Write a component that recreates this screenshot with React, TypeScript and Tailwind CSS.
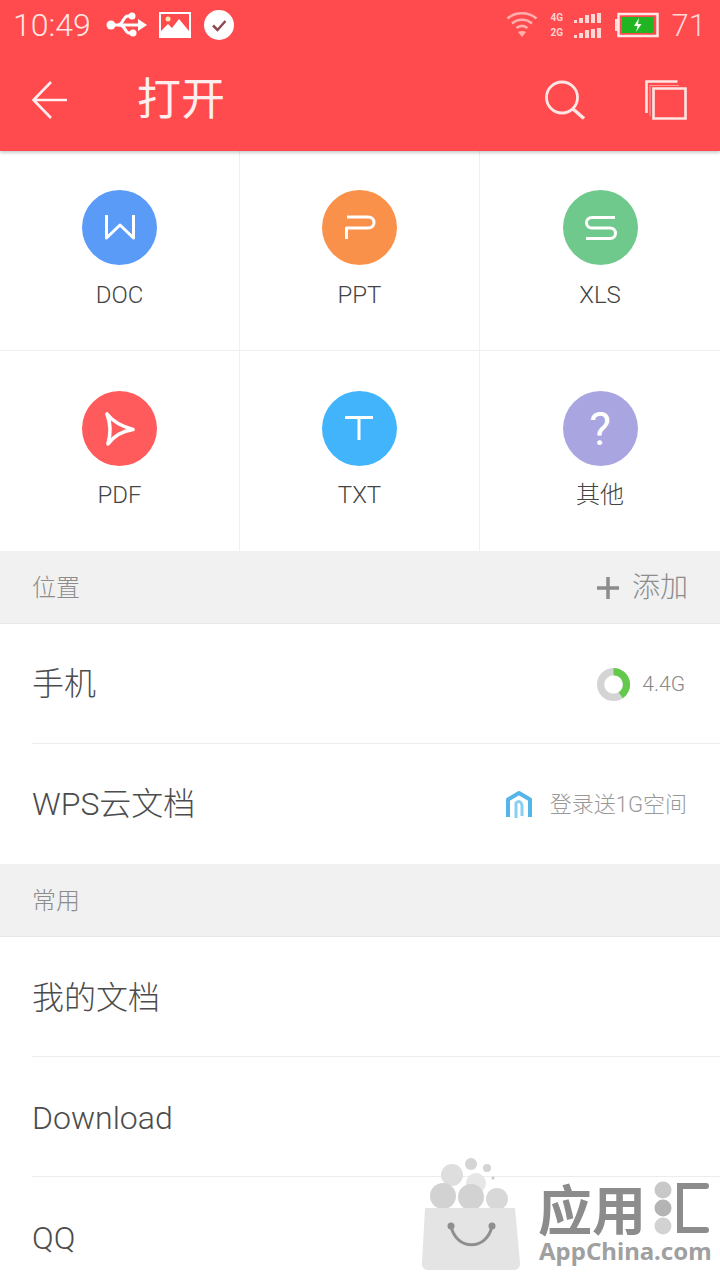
import type { ReactNode } from 'react';

const FONT = "font-['Roboto','Noto_Sans_CJK_SC',sans-serif]";

function UsbIcon() {
  return (
    <svg width="42" height="28" viewBox="0 0 42 28" fill="#fff">
      <circle cx="5" cy="14" r="4.500" />
      <path d="M5 12.500h29v3H5z" />
      <path d="M32 8l9 6-9 6z" />
      <path d="M12 14c5 0 5-9 10-9h3M14 14c5 0 5 8 9 8h3" fill="none" stroke="#fff" strokeWidth="3" />
      <circle cx="26" cy="5" r="3.500" />
      <circle cx="27" cy="22" r="3.500" />
    </svg>
  );
}

function PictureIcon() {
  return (
    <svg width="32" height="28" viewBox="0 0 32 28">
      <rect x="0" y="1" width="32" height="26" fill="#fff" />
      <rect x="2" y="3" width="28" height="17" fill="#ff4a4e" />
      <circle cx="9" cy="8" r="2.500" fill="#ffe9b0" />
      <path d="M2 20l7-7 4 4 7-9 10 12z" fill="#fff" />
    </svg>
  );
}

function CheckBadge() {
  return (
    <svg width="30" height="30" viewBox="0 0 30 30">
      <circle cx="15" cy="15" r="15" fill="#fff" />
      <path d="M9 15.500l4.500 4.500 8-9" fill="none" stroke="#8a4a50" strokeWidth="2.500" />
    </svg>
  );
}

function WifiIcon() {
  return (
    <svg width="32" height="28" viewBox="0 0 32 28" fill="none" stroke="#ffb0ae" strokeWidth="2.600">
      <path d="M1.500 7.500c8-7 21-7 29 0" />
      <path d="M6 12.500c6-5 14-5 20 0" />
      <path d="M10.500 17c3.500-2.800 7.500-2.800 11 0" />
      <path d="M16 26l-4-5c2.500-1.500 5.500-1.500 8 0z" fill="#ffb0ae" stroke="none" />
    </svg>
  );
}

function SignalRow({ label }: { label: string }) {
  return (
    <div className="flex h-[10px] items-center gap-[2px]">
      <span className="w-[15px] text-[10px] font-bold leading-none text-[#ffd0ce]">{label}</span>
      <span className="ml-[6px] h-[3px] w-[3px] self-end bg-[#ffd8d6]" />
      <span className="h-[5px] w-[4px] self-end bg-[#ffd8d6]" />
      <span className="h-[8px] w-[4px] self-end bg-[#ffd8d6]" />
      <span className="h-[9px] w-[4px] self-end bg-[#ffd8d6]" />
      <span className="h-[10px] w-[4px] self-end bg-[#ffd8d6]" />
    </div>
  );
}

function BatteryIcon() {
  return (
    <svg width="44" height="28" viewBox="0 0 44 28">
      <rect x="0" y="8" width="3" height="12" fill="#ffe0de" />
      <rect x="3.500" y="3" width="39" height="22" fill="none" stroke="#ffe8e6" strokeWidth="2.500" />
      <rect x="7" y="6" width="32" height="16" fill="#22b522" />
      <path d="M24 7l-5 8h3.500l-1.500 6 5.500-8H23z" fill="#fff" />
    </svg>
  );
}

function BackIcon() {
  return (
    <svg width="37" height="40" viewBox="0 0 37 40" fill="none" stroke="#ffeeee" strokeWidth="2.600">
      <path d="M36 20H3M20 2L2.500 20 20 38" />
    </svg>
  );
}

function SearchIcon() {
  return (
    <svg width="42" height="40" viewBox="0 0 42 40" fill="none" stroke="#ffe6e4">
      <circle cx="18" cy="17.500" r="15.500" strokeWidth="2.800" />
      <path d="M29 29l11 9.500" strokeWidth="3.500" />
    </svg>
  );
}

function TabsIcon() {
  return (
    <svg width="42" height="40" viewBox="0 0 42 40" fill="none" stroke="#ffe6e4" strokeWidth="2.600">
      <path d="M1.500 33V1.500h31" />
      <path d="M8.500 38.500V8.500h32v30z" />
      <path d="M5 36V5.500h29" strokeWidth="1.200" opacity="0.5" />
    </svg>
  );
}

const glyphs: Record<string, ReactNode> = {
  w: <path d="M24.500 25v23L38 35l13.500 13V25" />,
  p: <path d="M24.500 49V38H46c4 0 6-2.500 6-5.500S50 27 46 27H25" />,
  s: <path d="M52 27.500H29c-3.500 0-5.500 2.500-5.500 5.250S25.500 38 29 38h18c3.500 0 5.500 2.500 5.500 5.250S50.500 48.500 47 48.500H23" />,
  pdf: <path d="M25 23c4 10 4 19 1 30 6-8 14-13 25-14.500-9-2.500-19-6.500-26-15.500z" strokeWidth="3.600" />,
  t: <path d="M23 26.500h28M37 26.500V49" />,
};

function FileIcon({ color, glyph }: { color: string; glyph: string }) {
  return (
    <div className={`flex h-[75px] w-[75px] items-center justify-center rounded-full ${color}`}>
      {glyph === 'other' ? (
        <span className="text-[46px] leading-none text-white">?</span>
      ) : (
        <svg width="75" height="75" viewBox="0 0 75 75" fill="none" stroke="#fff" strokeWidth="3" strokeLinejoin="round">
          {glyphs[glyph]}
        </svg>
      )}
    </div>
  );
}

const fileTypes = [
  { label: 'DOC', color: 'bg-[#5b9bf8]', glyph: 'w' },
  { label: 'PPT', color: 'bg-[#f9914a]', glyph: 'p' },
  { label: 'XLS', color: 'bg-[#70c98c]', glyph: 's' },
  { label: 'PDF', color: 'bg-[#ff5a5c]', glyph: 'pdf' },
  { label: 'TXT', color: 'bg-[#41b4fb]', glyph: 't' },
  { label: '其他', color: 'bg-[#a9a5e0]', glyph: 'other' },
];

function SectionHeader({ title, action }: { title: string; action?: ReactNode }) {
  return (
    <div className="flex h-[73px] items-center justify-between border-b border-[#e8e8e8] bg-[#f1f1f1] px-[32px] pt-[2px]">
      <span className="text-[24px] font-light text-[#8c8c8c]">{title}</span>
      {action}
    </div>
  );
}

function ListRow({ title, right, divider = true, nudge = 'pt-[1px]' }: { title: string; right?: ReactNode; divider?: boolean; nudge?: string }) {
  return (
    <div className="pl-[32px]">
      <div className={`flex h-[120px] items-center justify-between pr-[33px] ${divider ? 'border-b border-[#ececec]' : ''}`}>
        <span className={`text-[32px] font-light text-[#4c4c4c] ${nudge}`}>{title}</span>
        {right}
      </div>
    </div>
  );
}

function StorageRing() {
  return (
    <svg width="33" height="33" viewBox="0 0 32 32" fill="none" strokeWidth="7">
      <circle cx="16" cy="16" r="12.500" stroke="#d4d4d4" />
      <path d="M16 3.500A12.500 12.500 0 0 1 23 26.400" stroke="#63c94b" />
    </svg>
  );
}

function CloudLogo() {
  return (
    <svg width="28" height="28" viewBox="0 0 28 28" fill="none" strokeWidth="4">
      <path d="M3 27V9.500L14 3l11 6.500V27" stroke="#55b4e8" strokeLinejoin="round" />
      <path d="M11 28V13c3-3 5-1 6 2v11" stroke="#8ccdf2" strokeWidth="3" />
    </svg>
  );
}

function Watermark() {
  return (
    <div className="absolute bottom-0 left-[420px] flex h-[122px] w-[300px] items-end font-['Noto_Sans',sans-serif]">
      <svg width="104" height="112" viewBox="0 0 104 112" className="mb-[10px] shrink-0">
        <circle cx="32" cy="17" r="11" fill="#dedede" />
        <circle cx="51" cy="6" r="6" fill="#d4d4d4" />
        <circle cx="67" cy="10" r="4" fill="#d4d4d4" />
        <circle cx="73" cy="20" r="1.500" fill="#c8c8c8" />
        <circle cx="56" cy="25" r="10" fill="#e6e6e6" />
        <circle cx="23" cy="38" r="13" fill="#d2d2d2" />
        <circle cx="51" cy="39" r="13" fill="#d2d2d2" />
        <circle cx="77" cy="41" r="11" fill="#d8d8d8" />
        <path d="M5 50h90l5 55a6 6 0 0 1-6 7H8a6 6 0 0 1-6-7z" fill="#e4e4e4" />
        <path d="M31 68c5 25 36 25 41 0" fill="none" stroke="#8f8f8f" strokeWidth="3" />
        <circle cx="31" cy="68" r="3.500" fill="#8f8f8f" />
        <circle cx="72" cy="68" r="3.500" fill="#8f8f8f" />
      </svg>
      <div className="mb-[16px] ml-[14px] flex w-[176px] flex-col items-start">
        <div className="flex h-[56px] items-center">
          <span className="text-[54px] font-bold leading-[56px] text-[#8c8c8c] font-['Noto_Sans_CJK_SC',sans-serif]">应用</span>
          <svg width="60" height="54" viewBox="0 0 60 54" className="ml-[4px] shrink-0">
            <circle cx="13" cy="9" r="8.500" fill="#c8c8c8" />
            <circle cx="13" cy="27" r="8.500" fill="#b4b4b4" />
            <circle cx="13" cy="45" r="8.500" fill="#d2d2d2" />
            <path d="M56 5H30v44h26" fill="none" stroke="#8c8c8c" strokeWidth="6" strokeLinecap="round" />
          </svg>
        </div>
        <span className="ml-[1px] mt-[2px] whitespace-nowrap text-[24px] font-bold leading-[26px] text-[#a0a0a0]">AppChina.com</span>
      </div>
    </div>
  );
}

export default function App() {
  return (
    <div className={`relative h-[1280px] w-[720px] overflow-hidden bg-white ${FONT}`}>
      <header className="relative z-10 h-[151px] bg-[#ff4a4e] shadow-[0_2px_3px_rgba(0,0,0,0.2)]">
        <div className="flex h-[50px] items-center justify-between pl-[13px] pr-[14px]">
          <div className="flex items-center">
            <span className="text-[32px] font-light leading-none text-[#ffe6e4]">10:49</span>
            <div className="ml-[15px]"><UsbIcon /></div>
            <div className="ml-[11px]"><PictureIcon /></div>
            <div className="ml-[13px]"><CheckBadge /></div>
          </div>
          <div className="flex items-center">
            <WifiIcon />
            <div className="ml-[13px] flex flex-col gap-[5px]">
              <SignalRow label="4G" />
              <SignalRow label="2G" />
            </div>
            <div className="ml-[14px]"><BatteryIcon /></div>
            <span className="ml-[13px] text-[31px] font-light leading-none text-[#ffd8d6]">71</span>
          </div>
        </div>
        <div className="flex h-[100px] items-center pl-[31px] pr-[33px]">
          <BackIcon />
          <h1 className="ml-[69px] text-[44px] font-normal leading-none text-[#ffeeee]">打开</h1>
          <div className="ml-auto flex items-center gap-[59px]">
            <SearchIcon />
            <TabsIcon />
          </div>
        </div>
      </header>

      <div className="grid grid-cols-3">
        {fileTypes.map((item, i) => (
          <div
            key={item.label}
            className={`flex h-[200px] flex-col items-center border-[#f0f0f0] ${i % 3 !== 2 ? 'border-r' : ''} ${i < 3 ? 'border-b pt-[39px]' : 'pt-[40px]'}`}
          >
            <FileIcon color={item.color} glyph={item.glyph} />
            <span className={`text-[24px] font-light leading-[30px] text-[#444444] ${i < 3 ? 'mt-[15px]' : 'mt-[14px]'}`}>{item.label}</span>
          </div>
        ))}
      </div>

      <SectionHeader
        title="位置"
        action={
          <div className="flex items-center gap-[13px] text-[#8c8c8c]">
            <svg width="22" height="22" viewBox="0 0 22 22" stroke="#8c8c8c" strokeWidth="3.500">
              <path d="M0 11h22M11 0v22" />
            </svg>
            <span className="text-[28px] font-light leading-none">添加</span>
          </div>
        }
      />
      <ListRow
        title="手机"
        nudge=""
        right={
          <div className="mr-[2px] flex items-center gap-[12px] pt-[2px]">
            <StorageRing />
            <span className="text-[21px] font-light text-[#888888]">4.4G</span>
          </div>
        }
      />
      <ListRow
        title="WPS云文档"
        nudge=""
        divider={false}
        right={
          <div className="flex items-center gap-[17px]">
            <CloudLogo />
            <span className="text-[22px] font-light text-[#999999]">登录送1G空间</span>
          </div>
        }
      />
      <SectionHeader title="常用" />
      <ListRow title="我的文档" nudge="pt-[2px]" />
      <ListRow title="Download" nudge="pt-[3px]" />
      <ListRow title="QQ" nudge="pt-[2px]" divider={false} />

      <Watermark />
    </div>
  );
}
